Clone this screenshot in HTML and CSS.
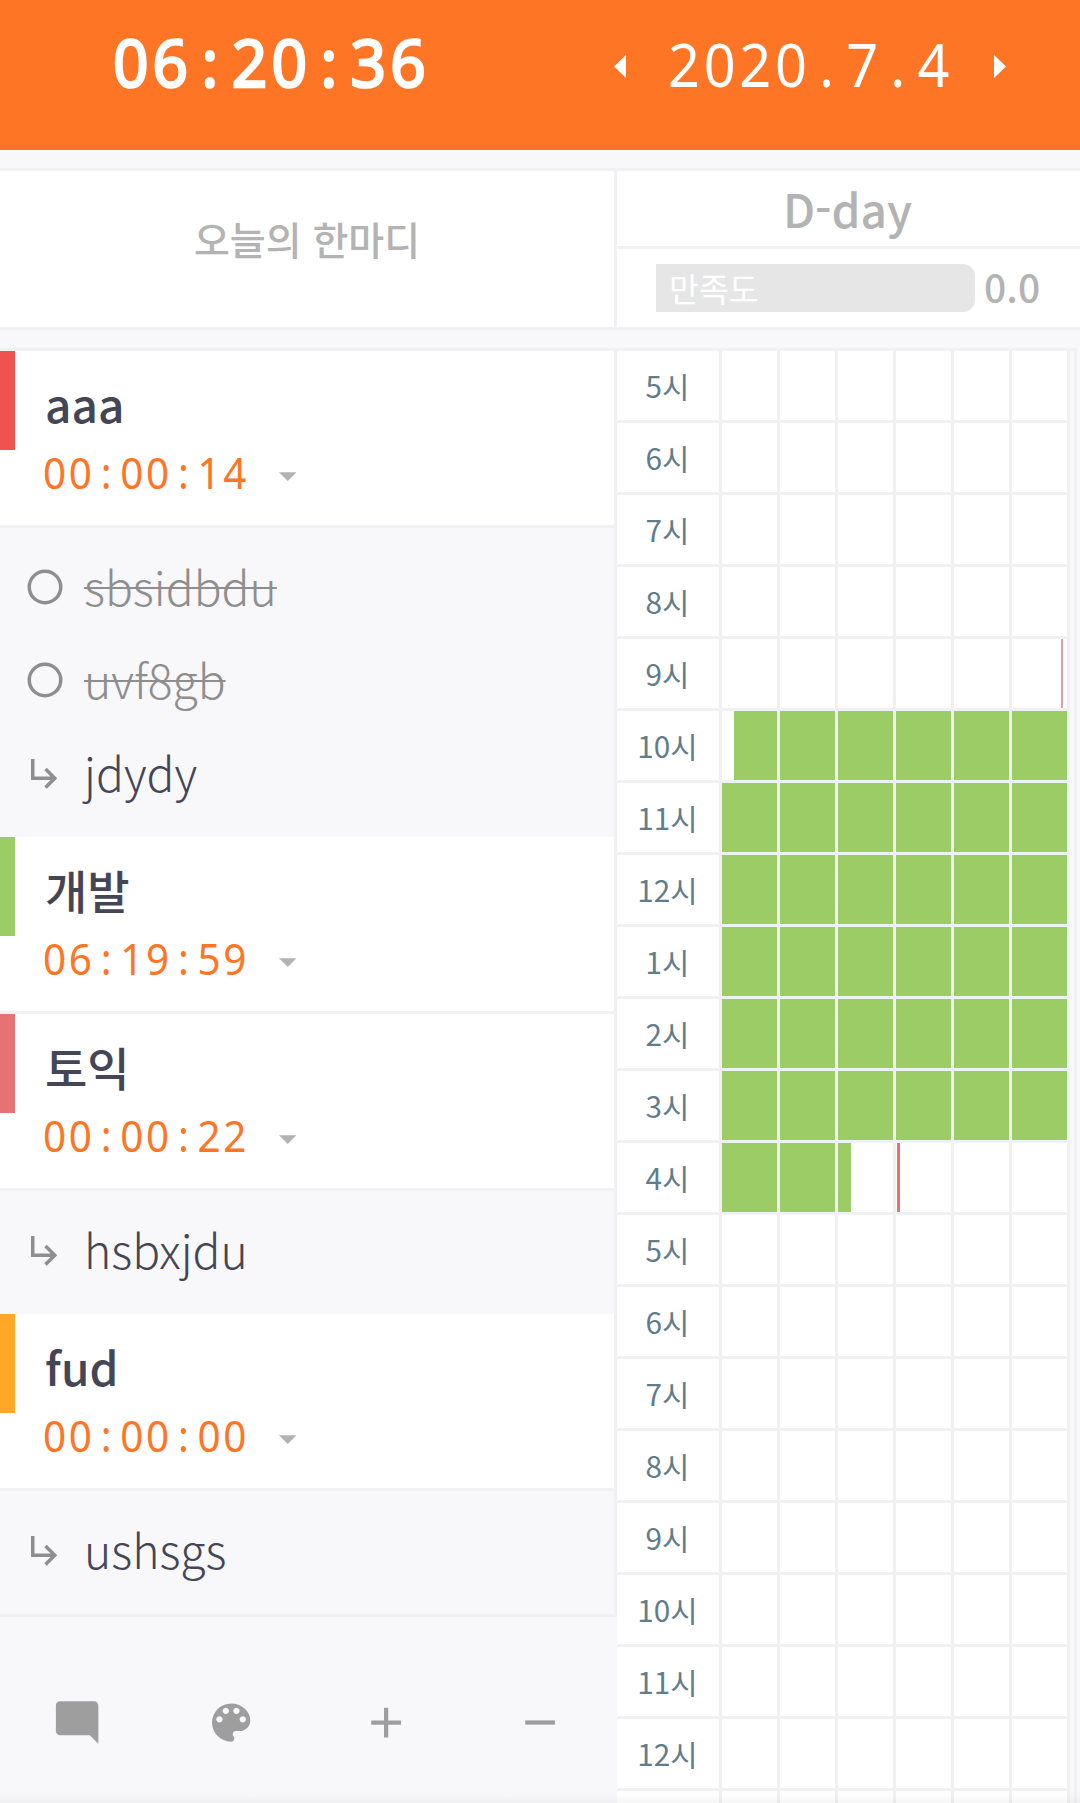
FILE: index.html
```html
<!DOCTYPE html>
<html lang="ko">
<head>
<meta charset="utf-8">
<title>오늘의 한마디</title>
<link rel="stylesheet" href="styles.css">
</head>
<body>
<svg class="sprite" aria-hidden="true">
  <symbol id="circle" viewBox="0 0 24 24"><circle cx="12" cy="12" r="9" fill="none" stroke="currentColor" stroke-width="2"/></symbol>
  <symbol id="sub" viewBox="0 0 24 24"><path d="M19 15l-6 6-1.42-1.42L15.17 16H4V4h2v10h9.17l-3.59-3.58L13 9l6 6z"/></symbol>
  <symbol id="drop" viewBox="0 0 10 5"><path d="M0 0l5 5 5-5z"/></symbol>
</svg>
<header class="topbar">
  <div class="clock mono">06<i>:</i>20<i>:</i>36</div>
  <div class="datenav">
    <svg class="nav" viewBox="0 0 12 23"><path d="M12 0v23L0 11.500z"/></svg>
    <div class="date mono">2020<i>.</i>7<i>.</i>4</div>
    <svg class="nav" viewBox="0 0 12 23"><path d="M0 0v23l12-11.500z"/></svg>
  </div>
</header>
<section class="summary">
  <div class="motto">오늘의 한마디</div>
  <div class="side">
    <div class="dday">D-day</div>
    <div class="rating"><div class="bar">만족도</div><div class="score">0.0</div></div>
  </div>
</section>
<main class="board">
  <div class="left">
    <div class="list">
      <article class="task red"><h2>aaa</h2><div class="time"><div class="mono">00<i>:</i>00<i>:</i>14</div><svg><use href="#drop"/></svg></div></article>
      <ul class="subs">
        <li class="done"><svg><use href="#circle"/></svg><span>sbsidbdu</span></li>
        <li class="done"><svg><use href="#circle"/></svg><span>uvf8gb</span></li>
        <li><svg><use href="#sub"/></svg><span>jdydy</span></li>
      </ul>
      <article class="task green"><h2>개발</h2><div class="time"><div class="mono">06<i>:</i>19<i>:</i>59</div><svg><use href="#drop"/></svg></div></article>
      <article class="task rose"><h2>토익</h2><div class="time"><div class="mono">00<i>:</i>00<i>:</i>22</div><svg><use href="#drop"/></svg></div></article>
      <ul class="subs"><li><svg><use href="#sub"/></svg><span>hsbxjdu</span></li></ul>
      <article class="task amber"><h2>fud</h2><div class="time"><div class="mono">00<i>:</i>00<i>:</i>00</div><svg><use href="#drop"/></svg></div></article>
      <ul class="subs"><li><svg><use href="#sub"/></svg><span>ushsgs</span></li></ul>
    </div>
    <nav class="tools">
      <svg viewBox="0 0 24 24"><path d="M21.990 4c0-1.100-.89-2-1.990-2H4c-1.100 0-2 .9-2 2v12c0 1.100.9 2 2 2h14l4 4-.01-18z"/></svg>
      <svg viewBox="0 0 24 24"><path d="M12 3c-4.970 0-9 4.030-9 9s4.030 9 9 9c.83 0 1.500-.67 1.500-1.500 0-.39-.15-.74-.39-1.010-.23-.26-.38-.61-.38-.99 0-.83.67-1.500 1.500-1.500H16c2.760 0 5-2.240 5-5 0-4.420-4.030-8-9-8zm-5.500 9c-.83 0-1.500-.67-1.500-1.500S5.670 9 6.500 9 8 9.670 8 10.500 7.330 12 6.500 12zm3-4C8.670 8 8 7.330 8 6.500S8.670 5 9.500 5s1.500.67 1.500 1.500S10.330 8 9.500 8zm5 0c-.83 0-1.500-.67-1.500-1.500S13.670 5 14.500 5s1.500.67 1.500 1.500S15.330 8 14.500 8zm3 4c-.83 0-1.500-.67-1.500-1.500S16.670 9 17.500 9s1.500.67 1.500 1.500-.67 1.500-1.500 1.500z"/></svg>
      <svg viewBox="0 0 24 24"><path d="M19 13h-6v6h-2v-6H5v-2h6V5h2v6h6v2z"/></svg>
      <svg viewBox="0 0 24 24"><path d="M19 13H5v-2h14v2z"/></svg>
    </nav>
  </div>
  <div class="hours" id="hours"></div>
</main>
<div class="fade"></div>
<script src="hours.js"></script>
</body>
</html>
```
FILE: hours.js
```js
const labels = [5, 6, 7, 8, 9, 10, 11, 12, 1, 2, 3, 4, 5, 6, 7, 8, 9, 10, 11, 12, 1];
// Blocks are [row, cell, start px, width px, colour class] inside a 55px ten-minute cell.
const blocks = [[4, 5, 49, 2, 'faint'], [5, 0, 12, 43, 'green'], [11, 0, 0, 55, 'green'],
  [11, 1, 0, 55, 'green'], [11, 2, 0, 13, 'green'], [11, 3, 1, 3, 'mark']];
for (let c = 1; c < 6; c++) blocks.push([5, c, 0, 55, 'green']);
for (let r = 6; r < 11; r++) for (let c = 0; c < 6; c++) blocks.push([r, c, 0, 55, 'green']);

const root = document.getElementById('hours');
labels.forEach((h, r) => {
  const row = document.createElement('div');
  row.className = 'hour';
  row.innerHTML = '<div class="label">' + (r < 20 ? h + '시' : '') + '</div>';
  for (let c = 0; c < 6; c++) {
    const cell = document.createElement('div');
    cell.className = 'cell';
    const b = blocks.find(b => b[0] === r && b[1] === c);
    if (b) cell.innerHTML = `<div class="block ${b[4]}" style="margin-left:${b[2]}px;width:${b[3]}px"></div>`;
    row.append(cell);
  }
  root.append(row);
});
```
FILE: styles.css
```css
* { box-sizing: border-box; margin: 0; padding: 0; }
body {
  width: 1080px; height: 1803px; overflow: hidden; position: relative;
  display: flex; flex-direction: column;
  background: #f8f8fa;
  font-family: "Noto Sans CJK KR", sans-serif;
}
svg { display: block; fill: currentColor; flex: none; }
.sprite { display: none; }

/* Fixed-pitch digits: slightly condensed, with separators in full-width slots */
.mono {
  font-family: "Noto Sans", sans-serif; display: flex; white-space: nowrap; flex: none;
  transform: scaleX(.94); transform-origin: 0 0;
}
.mono i { font-style: normal; text-align: center; flex: none; }

.topbar { height: 150px; display: flex; background: #ff7526; color: #fff; flex: none; }
.clock {
  margin: 16px 0 0 113px; width: 501px;
  font-size: 66px; line-height: 90px; letter-spacing: 4.380px;
  -webkit-text-stroke: 2.600px #fff;
}
.clock i { width: 42.130px; }
.datenav { display: flex; height: 132px; align-items: center; }
.nav { width: 12px; height: 23px; }
.date {
  width: 285px; font-size: 59.400px; line-height: 80px; letter-spacing: 3.940px;
  margin: 0 41px 5px 42px;
}
.date i { width: 37.910px; }

.summary {
  height: 162px; margin-top: 18px; flex: none; display: flex;
  border-top: 3px solid #f1f1f3; border-bottom: 3px solid #f1f1f3;
  background: #fff; color: #b3b3b3;
}
.motto {
  width: 617px; border-right: 3px solid #f1f1f3; padding-top: 37px;
  text-align: center; font-size: 39px; line-height: 60px; font-weight: 500;
}
.side { flex: 1; }
.dday {
  height: 78px; border-bottom: 3px solid #f1f1f3; padding-right: 2px;
  text-align: center; font-size: 46px; line-height: 74px; font-weight: 500;
}
.rating { display: flex; padding: 15px 0 0 39px; line-height: 48px; }
.bar {
  width: 319px; height: 48px; padding-left: 13px; border-radius: 0 12px 12px 0;
  background: #e6e6e6; color: #fff; font-size: 32.500px;
}
.score { margin-left: 9px; font-size: 39px; line-height: 44px; font-weight: 500; }

.board { margin-top: 18px; display: flex; flex: 1; min-height: 0; }
.left { width: 617px; }
.list {
  border: solid #f1f1f3; border-width: 3px 3px 3px 0;
}
.task {
  height: 177px; background: #fff linear-gradient(var(--tag), var(--tag)) no-repeat 0 0 / 15px 99px;
  border-bottom: 3px solid #f1f1f3; padding: 17px 0 0 45px;
}
.red { --tag: #ef5350; }
.green { --tag: #9ccc65; }
.rose { --tag: #e57373; }
.amber { --tag: #ffa726; }
.task h2 { font-size: 46px; line-height: 70px; font-weight: 500; color: #454655; }
.time { display: flex; margin: 5px 0 0 -2px; }
.time .mono { width: 206px; color: #ff7526; font-size: 43px; line-height: 60px; letter-spacing: 2.800px; }
.time i { width: 27.400px; }
.time svg { width: 17.500px; height: 9px; color: #b3b3b3; margin: 29px 0 0 30px; }
.subs { list-style: none; padding: 15px 0; }
.subs li { height: 93px; display: flex; align-items: center; padding-left: 24px; color: #454655; }
.subs svg { width: 42px; height: 42px; margin-bottom: 5px; color: #8e8e8e; }
.subs span { margin: 0 0 7px 18px; font-size: 46.300px; line-height: 70px; font-weight: 300; }
.subs .done { color: #8e8e8e; }
.done span { text-decoration: line-through; text-decoration-thickness: 2px; }
.tools { display: flex; padding-top: 80px; color: #9e9e9e; }
.tools svg { flex: 1; height: 51px; }

.hours {
  width: 460px; display: flex; flex-direction: column; overflow: hidden;
  border: solid #f1f1f3; border-width: 3px 3px 0 0;
}
.hour { height: 72px; flex: none; display: flex; }
.label, .cell { background: #fff; border-right: 3px solid #f1f1f3; border-bottom: 3px solid #f1f1f3; }
.label { width: 105px; padding-right: 1px; text-align: center; font-size: 29.700px; line-height: 69px; color: #607d8b; }
.cell { width: 58px; }
.block { height: 69px; background: #9ccc65; }
.block.mark { background: #e57373; }
.block.faint { background: #dba3a3; }

.fade {
  position: absolute; left: 0; right: 0; bottom: 0; height: 9px;
  background: linear-gradient(rgba(0, 0, 0, 0), rgba(0, 0, 0, .04));
}
```
